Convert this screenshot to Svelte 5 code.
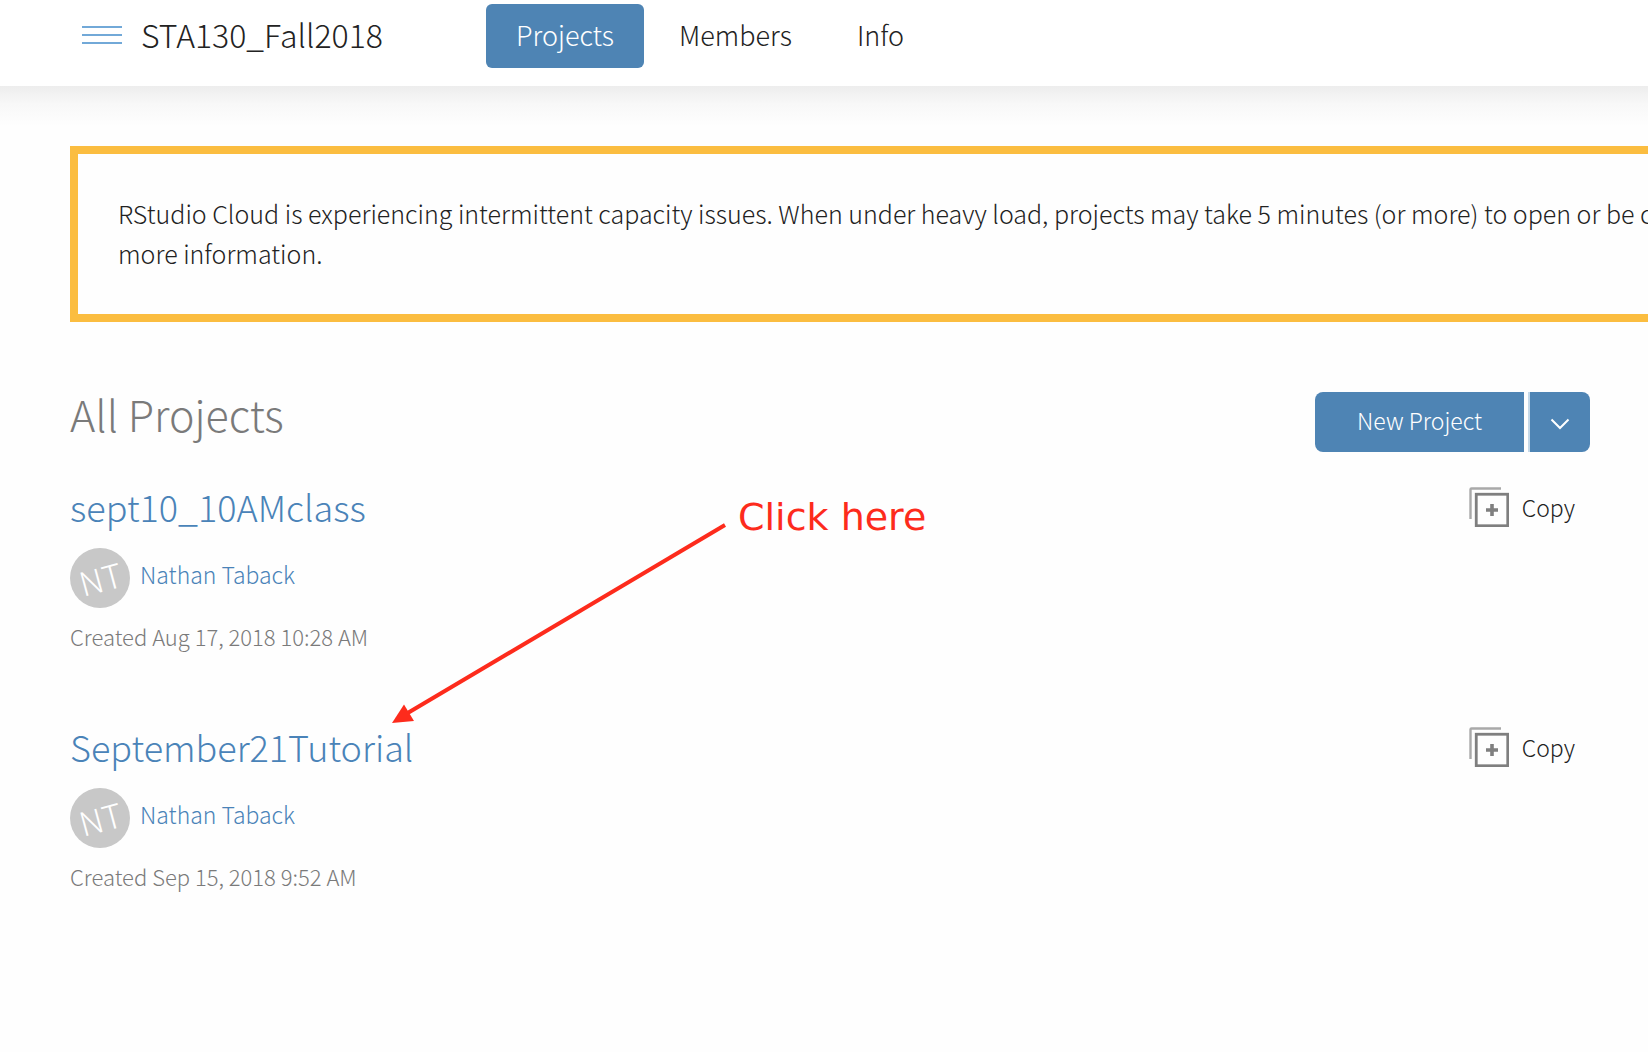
<script>
  const tabs = ['Projects', 'Members', 'Info'];
  const projects = [
    { name: 'sept10_10AMclass', owner: 'Nathan Taback', initials: 'NT', created: 'Aug 17, 2018 10:28 AM' },
    { name: 'September21Tutorial', owner: 'Nathan Taback', initials: 'NT', created: 'Sep 15, 2018 9:52 AM' }
  ];
  let active = $state('Projects');
</script>

<div class="page">
  <header>
    <button class="menu" aria-label="Open menu">
      <span></span><span></span><span></span>
    </button>
    <div class="space-name">STA130_Fall2018</div>
    <nav>
      {#each tabs as tab}
        <button class="tab" class:active={tab === active} onclick={() => (active = tab)}>{tab}</button>
      {/each}
    </nav>
  </header>

  <main>
    <section class="notice">
      RStudio Cloud is experiencing intermittent capacity issues. When under heavy load, projects may take 5 minutes (or more) to open or be created.<br />
      more information.
    </section>

    <div class="heading">
      <h1>All Projects</h1>
      <div class="split">
        <button class="new">New Project</button>
        <button class="more" aria-label="More project options">
          <svg width="20" height="12" viewBox="0 0 20 12"><path d="M1.5 1.5 10 10l8.5-8.5" fill="none" stroke="#fff" stroke-width="2" /></svg>
        </button>
      </div>
    </div>

    <ul class="projects">
      {#each projects as p}
        <li>
          <div class="title-row">
            <h2><a href="#project">{p.name}</a></h2>
            <button class="copy">
              <svg width="40" height="40" viewBox="0 0 40 40" fill="none">
                <path d="M1.5 32V2.5Q1.5 1.5 2.5 1.5H32" stroke="#a9a9a9" stroke-width="2.4" />
                <rect x="7.25" y="7.25" width="31.5" height="31.5" stroke="#7f7f7f" stroke-width="2.8" />
                <path d="M17 23h12M23 17v12" stroke="#7f7f7f" stroke-width="3.6" />
              </svg>
              Copy
            </button>
          </div>
          <div class="owner">
            <span class="avatar"><span class="initials">{p.initials}</span></span>
            <a href="#owner">{p.owner}</a>
          </div>
          <p class="created">Created {p.created}</p>
        </li>
      {/each}
    </ul>

    <div class="annotation">
      <svg width="336" height="202" viewBox="0 0 336 202">
        <path d="M14 192 333 3" stroke="#fd2b1c" stroke-width="4" />
        <path d="M0 201 12 182.500 22 199z" fill="#fd2b1c" />
      </svg>
      <span>Click here</span>
    </div>
  </main>
</div>

<style>
  :global(body) {
    margin: 0;
    background: #fefefe;
  }
  .page {
    min-height: 100vh;
    overflow: hidden;
    font-family: 'Noto Sans CJK SC', 'Noto Sans', sans-serif;
    font-weight: 300;
    color: #222;
  }
  button {
    font: inherit;
    color: inherit;
    background: none;
    border: 0;
    padding: 0;
    cursor: pointer;
  }
  a {
    color: #4a83b8;
    text-decoration: none;
  }
  header {
    display: flex;
    align-items: flex-start;
    padding: 4px 58px 18px 82px;
    line-height: 60px;
    background: #fff;
  }
  .menu {
    display: flex;
    flex-direction: column;
    justify-content: center;
    gap: 6px;
    width: 40px;
    height: 62px;
    margin-right: 19px;
  }
  .menu span {
    height: 2px;
    background: #72a9d8;
  }
  .space-name {
    width: 345px;
    font-size: 32px;
    white-space: nowrap;
  }
  nav {
    display: flex;
    gap: 5px;
  }
  .tab {
    padding: 1px 30px 3px;
    border-radius: 6px;
    font-size: 27px;
  }
  .tab.active {
    background: #4e84b4;
    color: #fff;
  }
  main {
    position: relative;
    padding: 60px 58px 60px 70px;
    background: linear-gradient(#ededed, #f8f8f8 18px, #fefefe 40px);
  }
  .notice {
    margin-right: -120px;
    padding: 39px 40px 41px;
    border: 8px solid #fbbd40;
    font-size: 25px;
    line-height: 40px;
    white-space: nowrap;
  }
  .heading {
    display: flex;
    justify-content: space-between;
    align-items: flex-start;
    margin-top: 70px;
  }
  h1,
  h2,
  p,
  ul {
    margin: 0;
    padding: 0;
    font-weight: 300;
  }
  h1 {
    font-size: 43px;
    line-height: 42px;
    color: #7a7a7a;
  }
  .split {
    display: flex;
    gap: 4px;
    color: #fff;
  }
  .new {
    padding: 0 42px 4px;
    border-radius: 8px 0 0 8px;
    background: #4e84b4;
    font-size: 23px;
    line-height: 56px;
  }
  .more {
    display: grid;
    place-items: center;
    width: 62px;
    height: 60px;
    padding-top: 4px;
    border-left: 2px solid #c4d8e8;
    border-radius: 0 8px 8px 0;
    background: #4e84b4;
    background-clip: padding-box;
  }
  .projects {
    display: flex;
    flex-direction: column;
    gap: 68px;
    margin-top: 28px;
    list-style: none;
  }
  .title-row {
    display: flex;
    justify-content: space-between;
    line-height: 52px;
  }
  h2 {
    font-size: 36px;
  }
  .copy {
    display: flex;
    align-items: center;
    gap: 13px;
    height: 54px;
    margin-bottom: -2px;
    padding-right: 15px;
    font-size: 23px;
  }
  .owner {
    display: flex;
    gap: 10px;
    margin-top: 16px;
    font-size: 23px;
    line-height: 52px;
  }
  .avatar {
    display: grid;
    place-items: center;
    width: 60px;
    height: 60px;
    border-radius: 50%;
    background: #c8c8c8;
    color: #fff;
  }
  .initials {
    font-size: 33px;
    line-height: 54px;
    transform: rotate(-15deg);
  }
  .created {
    margin-top: 12px;
    font-size: 22px;
    line-height: 32px;
    color: #7a7a7a;
  }
  .annotation {
    position: absolute;
    left: 392px;
    top: 411px;
    display: flex;
    align-items: flex-start;
    gap: 10px;
    width: max-content;
    pointer-events: none;
  }
  .annotation svg {
    margin-top: 25px;
  }
  .annotation span {
    font-family: 'Chalkboard', 'DejaVu Sans', sans-serif;
    font-size: 38px;
    font-weight: 400;
    line-height: 40px;
    color: #fd2b1c;
  }
</style>
